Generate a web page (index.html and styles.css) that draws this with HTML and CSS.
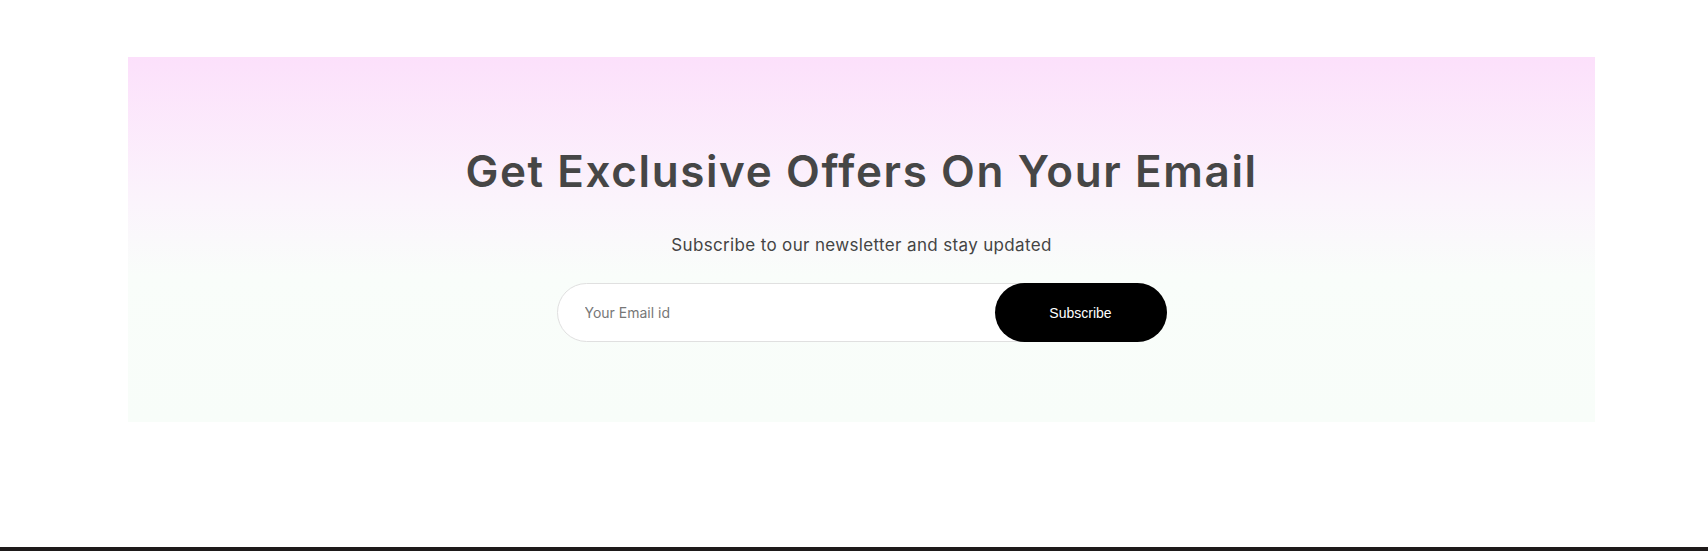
FILE: index.html
```html
<!DOCTYPE html>
<html lang="en">
<head>
<meta charset="utf-8">
<title>Newsletter</title>
<link rel="stylesheet" href="styles.css">
</head>
<body>
<section class="newsletter">
  <div class="panel">
    <h1 class="title">Get Exclusive Offers On Your Email</h1>
    <p class="subtitle">Subscribe to our newsletter and stay updated</p>
    <form class="form" onsubmit="return false;">
      <input class="email" type="email" placeholder="Your Email id">
      <button class="btn" type="submit">Subscribe</button>
    </form>
  </div>
</section>
<footer class="footer"></footer>
</body>
</html>
```

FILE: styles.css
```css
html, body {
  margin: 0;
  padding: 0;
  background: #ffffff;
}
body {
  font-family: Inter, "Open Sans", sans-serif;
  overflow: hidden;
}
.newsletter {
  padding: 57px 113px 125px 128px;
}
.panel {
  width: 1467px;
  height: 365px;
  box-sizing: border-box;
  padding-top: 86px;
  display: flex;
  flex-direction: column;
  align-items: center;
  background: linear-gradient(180deg, #fce0fb 0%, #fbf4fc 40%, #f9fdfa 60%, #f8fdf9 100%);
}
.title {
  margin: 0;
  font-family: Inter, sans-serif;
  font-weight: 600;
  font-size: 44px;
  line-height: 56px;
  letter-spacing: 1.6px;
  color: #464646;
}
.subtitle {
  margin: 33px 0 0;
  font-family: Inter, sans-serif;
  font-weight: 400;
  font-size: 17px;
  line-height: 26px;
  letter-spacing: 0.35px;
  color: #444444;
}
.form {
  margin-top: 25px;
  width: 610px;
  height: 59px;
  display: flex;
}
.email {
  flex: 1;
  box-sizing: border-box;
  height: 59px;
  border: 1px solid #e0e0e0;
  border-radius: 30px;
  background: #ffffff;
  padding: 0 0 0 27px;
  font-family: Inter, sans-serif;
  font-size: 14px;
  color: #333;
  outline: none;
}
.email::placeholder {
  color: #777777;
}
.btn {
  width: 172px;
  height: 59px;
  margin-left: -172px;
  border: none;
  border-radius: 30px;
  background: #000000;
  color: #ffffff;
  font-family: "Liberation Sans", Arial, sans-serif;
  font-size: 14px;
  cursor: pointer;
}
.footer {
  height: 10px;
  background: #1e1a1a;
}
```
